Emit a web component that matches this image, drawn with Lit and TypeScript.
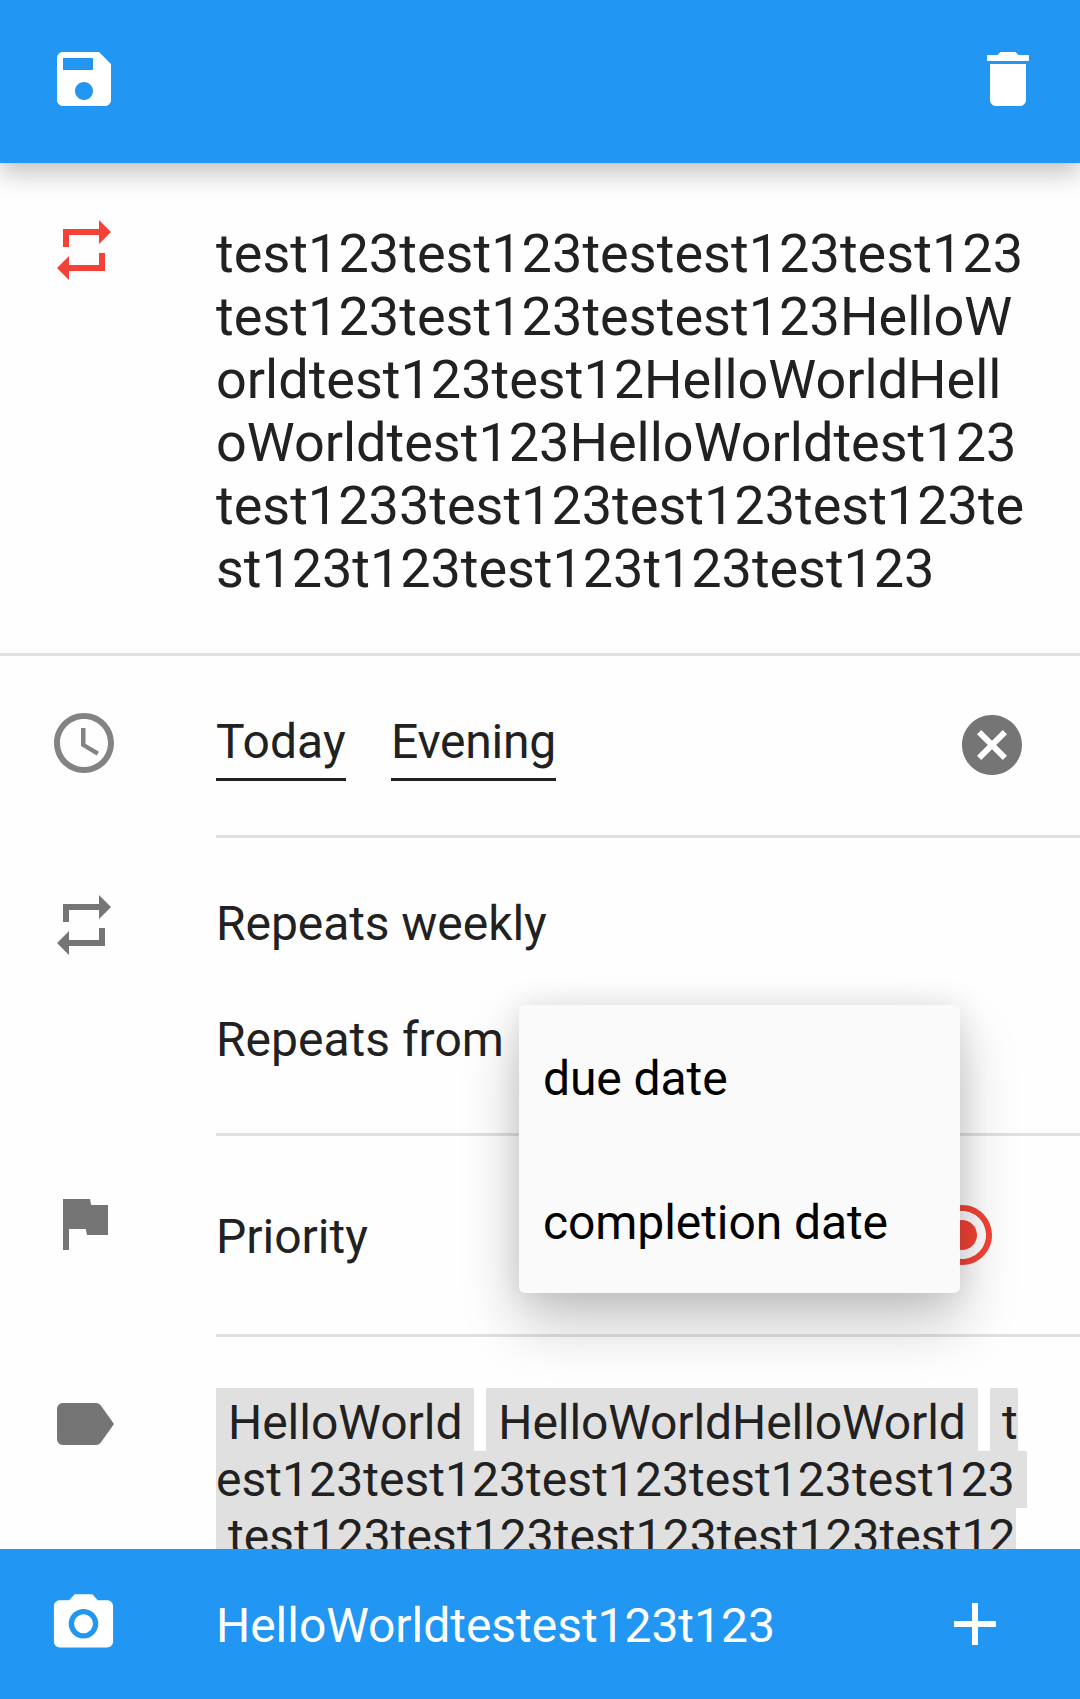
import { LitElement, html, css, svg } from "lit";
import { customElement, property } from "lit/decorators.js";

const ICONS: Record<string, unknown> = {
  save: svg`<path d="M17 3H5c-1.11 0-2 .9-2 2v14c0 1.1.89 2 2 2h14c1.1 0 2-.9 2-2V7l-4-4zm-5 16c-1.66 0-3-1.34-3-3s1.34-3 3-3 3 1.34 3 3-1.34 3-3 3zm3-10H5V5h10v4z"/>`,
  trash: svg`<path d="M6 19c0 1.1.9 2 2 2h8c1.1 0 2-.9 2-2V7H6v12zM19 4h-3.5l-1-1h-5l-1 1H5v2h14V4z"/>`,
  repeat: svg`<path d="M7 7h10v3l4-4-4-4v3H5v6h2V7zm10 10H7v-3l-4 4 4 4v-3h12v-6h-2v4z"/>`,
  clock: svg`<g fill-opacity=".9"><path d="M11.99 2C6.47 2 2 6.48 2 12s4.47 10 9.99 10C17.52 22 22 17.52 22 12S17.52 2 11.99 2zM12 20c-4.42 0-8-3.58-8-8s3.58-8 8-8 8 3.58 8 8-3.58 8-8 8z"/><path d="M12.5 7H11v6l5.25 3.15.75-1.23-4.5-2.67z"/></g>`,
  cancel: svg`<path d="M12 2C6.47 2 2 6.47 2 12s4.47 10 10 10 10-4.47 10-10S17.53 2 12 2zm5 13.59L15.59 17 12 13.41 8.41 17 7 15.59 10.59 12 7 8.41 8.41 7 12 10.59 15.59 7 17 8.41 13.41 12 17 15.59z"/>`,
  flag: svg`<path d="M14.4 6L14 4H5v17h2v-7h5.6l.4 2h7V6z"/>`,
  label: svg`<path d="M17.63 5.84C17.27 5.33 16.67 5 16 5L5 5.01C3.9 5.01 3 5.9 3 7v10c0 1.1.9 1.99 2 1.99L16 19c.67 0 1.27-.33 1.63-.84L22 12l-4.37-6.16z"/>`,
  radio: svg`<path d="M12 7c-2.76 0-5 2.24-5 5s2.24 5 5 5 5-2.24 5-5-2.24-5-5-5zm0-5C6.48 2 2 6.48 2 12s4.48 10 10 10 10-4.48 10-10S17.52 2 12 2zm0 18c-4.42 0-8-3.58-8-8s3.58-8 8-8 8 3.58 8 8-3.58 8-8 8z"/>`,
  camera: svg`<g transform="scale(.986)"><circle cx="12" cy="12.1" r="3.2"/><path d="M9 2.1L7.17 4.1H4c-1.1 0-2 .9-2 2v12c0 1.1.9 2 2 2h16c1.1 0 2-.9 2-2V6.1c0-1.1-.9-2-2-2h-3.17L15 2.1H9zm3 15c-2.76 0-5-2.24-5-5s2.24-5 5-5 5 2.24 5 5-2.24 5-5 5z"/></g>`,
  plus: svg`<path d="M19 13h-6v6h-2v-6H5v-2h6V5h2v6h6v2z"/>`,
};

@customElement("md-icon")
class MdIcon extends LitElement {
  @property() name = "";

  static styles = css`
    :host { display: block; flex: none; width: 72px; height: 72px; }
    svg { display: block; width: 72px; height: 72px; fill: currentColor; }
  `;

  render() {
    return html`<svg viewBox="0 0 24 24" aria-hidden="true">${ICONS[this.name]}</svg>`;
  }
}

/** A run of text with its letter-spacing in pixels. */
type Run = [text: string, tracking: number];

const TITLE: Run[] = [
  ["test123test123testest123test123", 0.045],
  ["test123test123testest123HelloW", 0.045],
  ["orldtest123test12HelloWorldHell", 0],
  ["oWorldtest123HelloWorldtest123", 0],
  ["test1233test123test123test123te", 0],
  ["st123t123test123t123test123", -0.05],
];

const TAG_ROWS: Run[][] = [
  [[" HelloWorld ", 0], [" HelloWorldHelloWorld ", -0.09], [" t", 0.4]],
  [["est123test123test123test123test123 ", 0.05]],
  [[" test123test123test123test123test12", 0.05]],
];

const spacing = (px: number) => `letter-spacing:${px}px`;

@customElement("app-root")
class AppRoot extends LitElement {
  static styles = css`
    :host {
      display: block;
      font-family: Roboto, "Noto Sans", sans-serif;
      font-size: 48px;
      line-height: 56px;
      color: #212121;
    }
    * { box-sizing: border-box; }
    .screen {
      width: 1080px;
      height: 1699px;
      display: flex;
      flex-direction: column;
      overflow: hidden;
      background: #fefefe;
    }
    .bar {
      flex: none;
      display: flex;
      justify-content: space-between;
      background: #2196f3;
      color: #fff;
      z-index: 1;
    }
    .top {
      height: 163px;
      padding: 43px 36px 0 48px;
      box-shadow: 0 10px 24px rgba(0, 0, 0, 0.24), 0 0 3px rgba(0, 0, 0, 0.1);
    }
    .bottom { height: 150px; padding: 39px 69px 0 48px; }
    .bottom .entry { flex: 1; padding: 10px 0 0 96px; letter-spacing: -0.04px; }
    .content {
      flex: 1;
      min-height: 0;
      overflow: hidden;
      display: flex;
      flex-direction: column;
    }
    .row { flex: none; display: flex; padding-left: 48px; }
    .row md-icon { color: #757575; }
    .body { flex: 1; margin-left: 96px; display: flex; border-bottom: 3px solid #e0e0e0; }
    .row md-icon.red { color: #f44336; }
    .title { height: 493px; border-bottom: 3px solid #e0e0e0; padding-top: 51px; }
    .name {
      margin-left: 96px;
      padding-top: 8px;
      font-size: 54px;
      line-height: 63px;
    }
    .line { white-space: pre; }
    .due { height: 182px; }
    .due > md-icon { margin-top: 51px; }
    .due .body { padding: 58px 52px 0 0; gap: 45px; }
    .link { height: 67px; border-bottom: 3px solid #212121; white-space: nowrap; }
    .day { width: 130px; letter-spacing: 0.1px; }
    .time { width: 165px; letter-spacing: -0.25px; }
    .due .body md-icon { margin: -5px 0 0 auto; }
    .recur { height: 298px; }
    .recur > md-icon { margin-top: 51px; }
    .recur .body { flex-direction: column; gap: 60px; padding-top: 58px; }
    .weekly { letter-spacing: -0.07px; }
    .from { position: relative; white-space: nowrap; }
    .menu {
      position: absolute;
      left: 303px;
      top: -7px;
      width: 441px;
      height: 288px;
      border-radius: 6px;
      background: #fafafa;
      color: #000;
      z-index: 2;
      letter-spacing: -0.08px;
      box-shadow: 0 30px 58px rgba(0, 0, 0, 0.22), 0 0 30px rgba(0, 0, 0, 0.1);
    }
    .option { height: 144px; padding: 46px 24px 0; }
    .priority { height: 201px; }
    .priority > md-icon { margin-top: 51px; }
    .priority .body { justify-content: space-between; padding: 73px 82px 0 0; }
    .priority .body md-icon { margin-top: -10px; color: #f44336; }
    .tags > md-icon { margin-top: 51px; }
    .tagrows { margin-left: 96px; padding-top: 51px; }
    .tagrow { display: flex; gap: 12px; height: 57px; white-space: pre; }
    .tagrow:first-child { height: 63px; }
    .tag { background: #e0e0e0; padding-top: 1px; }
    .tagrow:first-child .tag { padding-top: 7px; }
  `;

  render() {
    return html`
      <div class="screen">
        <header class="bar top">
          <md-icon name="save"></md-icon>
          <md-icon name="trash"></md-icon>
        </header>
        <main class="content">
          <section class="row title">
            <md-icon class="red" name="repeat"></md-icon>
            <div class="name">
              ${TITLE.map(([line, px]) => html`<div class="line" style=${spacing(px)}>${line}</div>`)}
            </div>
          </section>
          <section class="row due">
            <md-icon name="clock"></md-icon>
            <div class="body">
              <span class="link day">Today</span>
              <span class="link time">Evening</span>
              <md-icon name="cancel"></md-icon>
            </div>
          </section>
          <section class="row recur">
            <md-icon name="repeat"></md-icon>
            <div class="body">
              <div class="weekly">Repeats weekly</div>
              <div class="from">
                Repeats from
                <div class="menu">
                  <div class="option">due date</div>
                  <div class="option">completion date</div>
                </div>
              </div>
            </div>
          </section>
          <section class="row priority">
            <md-icon name="flag"></md-icon>
            <div class="body">
              <span>Priority</span>
              <md-icon name="radio"></md-icon>
            </div>
          </section>
          <section class="row tags">
            <md-icon name="label"></md-icon>
            <div class="tagrows">
              ${TAG_ROWS.map(
                (row) => html`<div class="tagrow">${row.map(
                  ([tag, px]) => html`<span class="tag" style=${spacing(px)}>${tag}</span>`,
                )}</div>`,
              )}
            </div>
          </section>
        </main>
        <footer class="bar bottom">
          <md-icon name="camera"></md-icon>
          <div class="entry">HelloWorldtestest123t123</div>
          <md-icon name="plus"></md-icon>
        </footer>
      </div>
    `;
  }
}
